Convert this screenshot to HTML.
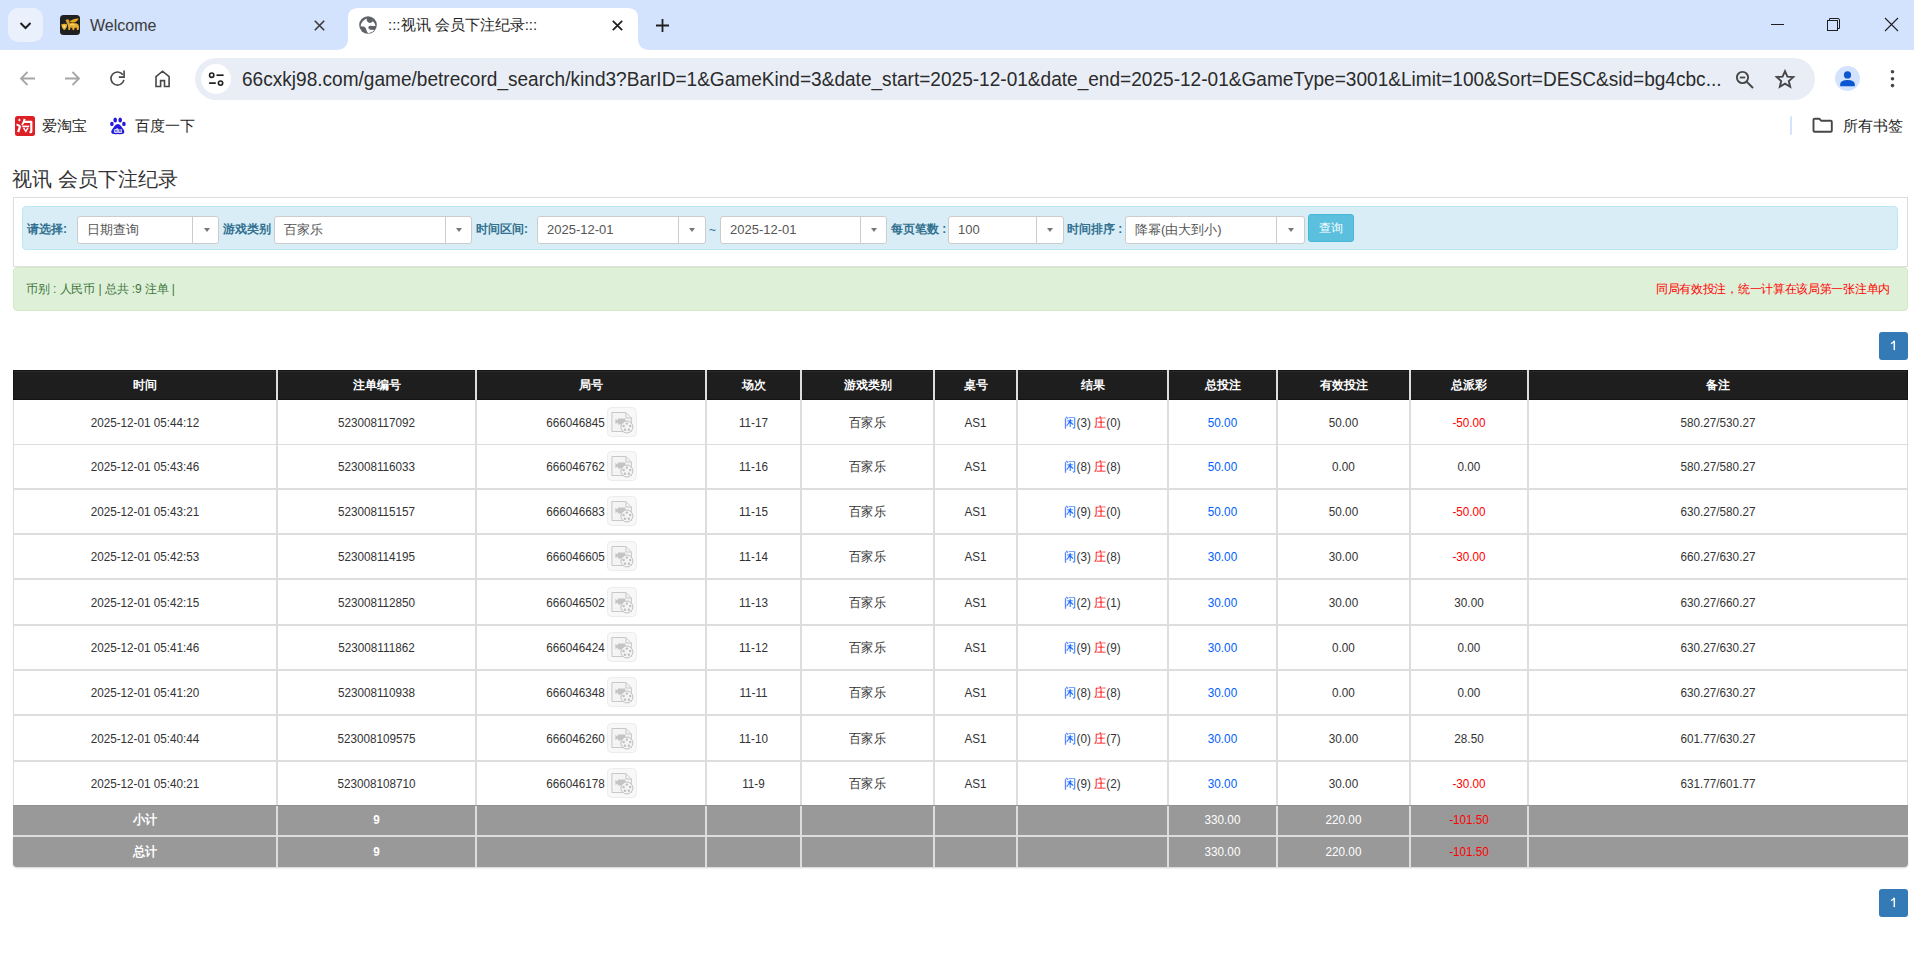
<!DOCTYPE html>
<html><head><meta charset="utf-8"><title>:::视讯 会员下注纪录:::</title>
<style>
*{box-sizing:border-box;margin:0;padding:0}
html,body{width:1914px;height:953px;overflow:hidden;background:#fff;font-family:"Liberation Sans",sans-serif;color:#333}
.a{position:absolute}
#tabbar{left:0;top:0;width:1914px;height:50px;background:#d3e3fd}
#toolbar{left:0;top:50px;width:1914px;height:53px;background:#fff}
#omni{left:195px;top:58px;width:1620px;height:42px;border-radius:21px;background:#e9eef6}
.url{left:242px;top:67px;font-size:20.5px;line-height:24px;color:#2b2b2b;white-space:nowrap;transform-origin:0 0;transform:scaleX(0.93)}
.bm{font-size:15px;color:#1f1f1f;white-space:nowrap}

.th{height:30px;line-height:30px;text-align:center;color:#fff;font-weight:bold;font-size:12px}
.td{text-align:center;font-size:12.5px;color:#333;white-space:nowrap;transform:scaleX(0.936)}
.tt{text-align:center;font-size:12.5px;color:#fff;white-space:nowrap;transform:scaleX(0.936)}
.bl{color:#0060ff}
.rd{color:#f00}
.ic{display:inline-block;width:30px;height:30px;vertical-align:middle;margin-left:3px;line-height:0;position:relative;top:-2px;transform:scaleX(1.068)}
.sel{height:28px;background:#fff;border:1px solid #ccc;border-radius:3px;font-size:13px;color:#555;line-height:26px;padding-left:9px;white-space:nowrap}
.sel i{position:absolute;top:0;bottom:0;border-left:1px solid #ccc}
.sel b{position:absolute;top:11px;width:0;height:0;border-left:3.5px solid transparent;border-right:3.5px solid transparent;border-top:4px solid #777;margin-left:1px}
.lb{font-size:12px;font-weight:bold;color:#31708f;white-space:nowrap;line-height:16px}
</style></head><body>
<!-- TAB BAR -->
<div id="tabbar" class="a"></div>
<div class="a" style="left:8px;top:8px;width:35px;height:34px;border-radius:10px;background:#eaf1fd"></div>
<svg class="a" style="left:17px;top:17px" width="17" height="17" viewBox="0 0 17 17"><path d="M3.5 6 L8.5 11 L13.5 6" fill="none" stroke="#1f1f1f" stroke-width="2"/></svg>
<!-- inactive tab -->
<svg class="a" style="left:60px;top:15px" width="20" height="20" viewBox="0 0 20 20"><rect x="0" y="0" width="20" height="20" rx="3.5" fill="#202020"/><path d="M9.5 7 Q12 3.2 18.8 3.4 Q17.5 6.5 13 7.8 Z" fill="#e6a51c"/><path d="M5.5 5 Q7.5 3.5 9.2 5 L9.6 8.5 L7 9 Z" fill="#d9a030"/><path d="M7.5 8.5 Q11 7.6 16 8.3 Q18.8 8.8 19 11.5 L18.6 15 L17 15 L16.5 12.5 L14.5 13 L14.2 15 L12.6 15 L12.2 12.8 L10.4 12.6 L10 15 L8.4 15 L8.2 12 Z" fill="#e8b030"/><path d="M1.3 9.2 Q4.3 8.2 7.3 9.2 Q7 13.5 4.3 15 Q1.6 13.5 1.3 9.2Z" fill="#eab234"/><circle cx="4.3" cy="11.5" r="1" fill="#fff1b0"/><path d="M10 9.5 Q13 9 15 10" stroke="#fbe38a" stroke-width="0.8" fill="none"/></svg>
<div class="a" style="left:90px;top:16px;font-size:16px;color:#3a3a3a;line-height:20px">Welcome</div>
<svg class="a" style="left:313px;top:19px" width="13" height="13" viewBox="0 0 13 13"><path d="M1.8 1.8 L11.2 11.2 M11.2 1.8 L1.8 11.2" stroke="#3a3a3a" stroke-width="1.6"/></svg>
<!-- active tab -->
<svg class="a" style="left:336px;top:7px" width="314" height="43" viewBox="0 0 314 43"><path d="M0 43 Q12 43 12 31 L12 11 Q12 1 22 1 L292 1 Q302 1 302 11 L302 31 Q302 43 314 43 Z" fill="#fff"/></svg>
<svg class="a" style="left:359px;top:16px" width="18" height="18" viewBox="0 0 18 18"><circle cx="9" cy="9" r="8.8" fill="#5f6368"/><path d="M1.6 10.4 Q2.2 5 7.6 2.6 Q7.2 5.4 9.4 6.6 Q12 7.8 13.8 5.2 Q16.2 7 16.6 9.8 Q14 10.4 12 9.8 Q9.6 9.4 9.3 11.6 Q9.2 13.6 11.6 13.8 L15.6 13.9 Q13.4 16.6 9.2 17.2 Q7.8 15.8 7.4 14.2 Q7.2 11.6 5.2 10.8 Q3.6 10.2 1.6 10.4 Z" fill="#fff"/></svg>
<div class="a" style="left:388px;top:15px;font-size:15px;color:#1f1f1f;line-height:20px;white-space:nowrap">:::视讯 会员下注纪录:::</div>
<svg class="a" style="left:611px;top:19px" width="13" height="13" viewBox="0 0 13 13"><path d="M1.8 1.8 L11.2 11.2 M11.2 1.8 L1.8 11.2" stroke="#1f1f1f" stroke-width="1.7"/></svg>
<svg class="a" style="left:655px;top:18px" width="15" height="15" viewBox="0 0 15 15"><path d="M7.5 1 V14 M1 7.5 H14" stroke="#1f1f1f" stroke-width="1.8"/></svg>
<!-- window controls -->
<div class="a" style="left:1771px;top:24px;width:13px;height:1px;background:#1f1f1f"></div>
<svg class="a" style="left:1826px;top:17px" width="16" height="16" viewBox="0 0 16 16"><rect x="1.5" y="3.5" width="10" height="10" fill="none" stroke="#1f1f1f" stroke-width="1"/><path d="M3.5 3.5 V1.5 H12 Q13.5 1.5 13.5 3 V11.5 H11.5" fill="none" stroke="#1f1f1f" stroke-width="1"/></svg>
<svg class="a" style="left:1884px;top:17px" width="15" height="15" viewBox="0 0 15 15"><path d="M1 1 L14 14 M14 1 L1 14" stroke="#1f1f1f" stroke-width="1.1"/></svg>

<!-- TOOLBAR -->
<div id="toolbar" class="a"></div>
<div id="omni" class="a"></div>
<div class="url a">66cxkj98.com/game/betrecord_search/kind3?BarID=1&amp;GameKind=3&amp;date_start=2025-12-01&amp;date_end=2025-12-01&amp;GameType=3001&amp;Limit=100&amp;Sort=DESC&amp;sid=bg4cbc...</div>


<!-- toolbar icons -->
<svg class="a" style="left:18px;top:69px" width="19" height="19" viewBox="0 0 19 19"><path d="M17 9.5 H3.5 M9.5 3 L3 9.5 L9.5 16" fill="none" stroke="#a6a6a6" stroke-width="1.8"/></svg>
<svg class="a" style="left:63px;top:69px" width="19" height="19" viewBox="0 0 19 19"><path d="M2 9.5 H15.5 M9.5 3 L16 9.5 L9.5 16" fill="none" stroke="#a6a6a6" stroke-width="1.8"/></svg>
<svg class="a" style="left:108px;top:69px" width="19" height="19" viewBox="0 0 19 19"><path d="M15.9 10.8 A6.55 6.55 0 1 1 14.9 5.8" fill="none" stroke="#474747" stroke-width="1.6"/><path d="M16.1 1.6 V8.1 H10.8" fill="none" stroke="#474747" stroke-width="1.6"/></svg>
<svg class="a" style="left:153px;top:68px" width="20" height="21" viewBox="0 0 20 21"><path d="M3 18.5 V8.6 L9.55 3.2 L16.1 8.6 V18.5 H11.5 V12.6 H7.6 V18.5 Z" fill="none" stroke="#474747" stroke-width="1.6" stroke-linejoin="miter"/></svg>
<div class="a" style="left:201px;top:64px;width:30px;height:30px;border-radius:50%;background:#fff"></div>
<svg class="a" style="left:207px;top:70px" width="18" height="18" viewBox="0 0 18 18"><circle cx="4.7" cy="5.2" r="2.15" fill="none" stroke="#1f1f1f" stroke-width="1.6"/><path d="M9.5 5.2 H16.6" stroke="#1f1f1f" stroke-width="1.7"/><circle cx="13.55" cy="13.1" r="2.15" fill="none" stroke="#1f1f1f" stroke-width="1.6"/><path d="M2.1 13.1 H8.8" stroke="#1f1f1f" stroke-width="1.7"/></svg>
<svg class="a" style="left:1735px;top:70px" width="20" height="20" viewBox="0 0 20 20"><circle cx="7.5" cy="7.5" r="5.6" fill="none" stroke="#474747" stroke-width="1.9"/><path d="M4.8 7.5 H10.2" stroke="#474747" stroke-width="1.8"/><path d="M11.6 11.6 L18 18" stroke="#474747" stroke-width="2"/></svg>
<svg class="a" style="left:1774px;top:69px" width="22" height="21" viewBox="0 0 22 21"><path d="M11 2.2 L13.4 7.6 L19.3 8.1 L14.8 12 L16.2 17.8 L11 14.7 L5.8 17.8 L7.2 12 L2.7 8.1 L8.6 7.6 Z" fill="none" stroke="#474747" stroke-width="1.9" stroke-linejoin="miter"/></svg>
<div class="a" style="left:1835px;top:66px;width:25px;height:25px;border-radius:50%;background:#d3e3fd"></div>
<svg class="a" style="left:1835px;top:66px" width="25" height="25" viewBox="0 0 25 25"><circle cx="12.5" cy="8.9" r="3.6" fill="#0b57d0"/><path d="M5.2 20.2 V18.3 Q5.2 14.3 12.5 14.1 Q19.8 14.3 19.8 18.3 V20.2 Z" fill="#0b57d0"/></svg>
<svg class="a" style="left:1888px;top:69px" width="9" height="20" viewBox="0 0 9 20"><circle cx="4.5" cy="2.8" r="1.8" fill="#474747"/><circle cx="4.5" cy="9.8" r="1.8" fill="#474747"/><circle cx="4.5" cy="16.6" r="1.8" fill="#474747"/></svg>
<!-- bookmark icons -->
<svg class="a" style="left:15px;top:116px" width="20" height="20" viewBox="0 0 20 20"><rect x="0" y="0" width="20" height="20" rx="2.5" fill="#dd1f26"/><path d="M4.3 2.3 L4.9 3.6 L6.1 4 L4.9 4.4 L4.3 5.7 L3.7 4.4 L2.5 4 L3.7 3.6Z" fill="#fff"/><path d="M1.6 7.4 Q4.6 7.8 6.2 10.2 Q5.2 13.4 4.2 16.6 L2 15.4 Q3.4 12.6 3.7 10.8 Q2.8 9.8 1.4 9.4Z" fill="#fff"/><path d="M8.7 2.6 L10.6 3.3 L10.1 4.8 H16.2 Q17.4 4.8 17.4 6.1 V15.6 Q17.4 17.2 15.9 17.2 H14.6 L14.1 15.5 H15.2 V6.9 H9.3 Q8.4 8.4 7.2 9.5 L6.3 8.4 Q7.9 6.2 8.7 2.6Z" fill="#fff"/><path d="M7.3 9.6 H14.2 V11.2 H7.3Z" fill="#fff"/><path d="M7.8 11.9 L10.8 16.8 L13.7 11.9 L12.2 11.6 L10.8 14.2 L9.4 11.6Z" fill="#fff"/></svg>
<svg class="a" style="left:109px;top:116px" width="18" height="20" viewBox="0 0 18 20"><ellipse cx="6.2" cy="4.1" rx="1.8" ry="2.5" fill="#2319dc"/><ellipse cx="11.2" cy="4.1" rx="1.8" ry="2.5" fill="#2319dc"/><ellipse cx="2.9" cy="7.9" rx="1.8" ry="2.2" fill="#2319dc"/><ellipse cx="14.9" cy="7.9" rx="1.8" ry="2.2" fill="#2319dc"/><path d="M8.8 8 Q10.6 8 12.2 10.2 L14.8 14 Q16.2 16.6 14.2 17.8 Q12 18.6 8.8 18 Q5.6 18.6 3.4 17.8 Q1.4 16.6 2.8 14 L5.4 10.2 Q7 8 8.8 8Z" fill="#2319dc"/><text x="8.8" y="16.7" font-size="7" font-weight="bold" text-anchor="middle" fill="#fff" font-family="Liberation Sans" letter-spacing="-0.3">du</text></svg>
<div class="a" style="left:1790px;top:116px;width:2px;height:19px;background:#d3e3fd;border-radius:1px"></div>
<svg class="a" style="left:1811px;top:116px" width="22" height="18" viewBox="0 0 22 18"><path d="M2.5 3.8 Q2.5 2.8 3.5 2.8 H8.3 L10.3 4.8 H19.8 Q20.8 4.8 20.8 5.8 V14.8 Q20.8 15.8 19.8 15.8 H3.5 Q2.5 15.8 2.5 14.8 Z" fill="none" stroke="#474747" stroke-width="1.9"/></svg>
<!-- BOOKMARKS -->
<div class="a bm" style="left:42px;top:117px">爱淘宝</div>
<div class="a bm" style="left:135px;top:117px">百度一下</div>
<div class="a bm" style="left:1843px;top:117px">所有书签</div>

<!-- PAGE -->
<div class="a" style="left:12px;top:166px;font-size:20px;color:#333;white-space:nowrap">视讯 会员下注纪录</div>

<!-- panel -->
<div class="a" style="left:13px;top:197px;width:1895px;height:70px;border:1px solid #ddd"></div>
<div class="a" style="left:22px;top:206px;width:1876px;height:44px;background:#d9edf7;border:1px solid #bce8f1;border-radius:4px"></div>
<div class="a lb" style="left:27px;top:221px">请选择:</div>
<div class="a sel" style="left:77px;top:216px;width:142px">日期查询<i style="left:114px"></i><b style="left:125px"></b></div>
<div class="a lb" style="left:223px;top:221px">游戏类别</div>
<div class="a sel" style="left:274px;top:216px;width:198px">百家乐<i style="left:170px"></i><b style="left:180px"></b></div>
<div class="a lb" style="left:476px;top:221px">时间区间:</div>
<div class="a sel" style="left:537px;top:216px;width:169px">2025-12-01<i style="left:140px"></i><b style="left:150px"></b></div>
<div class="a" style="left:709px;top:223px;font-size:12px;color:#31708f">~</div>
<div class="a sel" style="left:720px;top:216px;width:167px">2025-12-01<i style="left:139px"></i><b style="left:149px"></b></div>
<div class="a lb" style="left:891px;top:221px">每页笔数 :</div>
<div class="a sel" style="left:948px;top:216px;width:116px">100<i style="left:87px"></i><b style="left:97px"></b></div>
<div class="a lb" style="left:1067px;top:221px">时间排序 :</div>
<div class="a sel" style="left:1125px;top:216px;width:180px">降幂(由大到小)<i style="left:150px"></i><b style="left:161px"></b></div>
<div class="a" style="left:1308px;top:214px;width:46px;height:28px;background:#5bc0de;border:1px solid #46b8da;border-radius:3px;color:#fff;font-size:12px;text-align:center;line-height:26px">查询</div>
<!-- green -->
<div class="a" style="left:13px;top:267px;width:1895px;height:44px;background:#dff0d8;border:1px solid #d6e9c6;border-radius:4px"></div>
<div class="a" style="left:26px;top:281px;font-size:12px;letter-spacing:-0.1px;color:#3c763d;white-space:nowrap;line-height:16px">币别 : 人民币 | 总共 :9 注单 |</div>
<div class="a" style="left:1600px;top:281px;width:1290px;left:600px;text-align:right;font-size:12px;letter-spacing:-0.3px;color:#f00;white-space:nowrap;line-height:16px">同局有效投注，统一计算在该局第一张注单内</div>
<!-- pagination -->
<div class="a" style="left:1879px;top:332px;width:29px;height:28px;background:#337ab7;border-radius:3px"><svg width="29" height="28" viewBox="0 0 29 28" style="display:block"><path d="M15.3 8.8 V18.1" stroke="#fff" stroke-width="1.5"/><path d="M15.4 8.8 Q14.2 10.8 12 11.6" stroke="#fff" stroke-width="1.3" fill="none"/></svg></div>
<div class="a" style="left:1879px;top:889px;width:29px;height:28px;background:#337ab7;border-radius:3px"><svg width="29" height="28" viewBox="0 0 29 28" style="display:block"><path d="M15.3 8.8 V18.1" stroke="#fff" stroke-width="1.5"/><path d="M15.4 8.8 Q14.2 10.8 12 11.6" stroke="#fff" stroke-width="1.3" fill="none"/></svg></div>
<div class="a" style="left:13px;top:370px;width:1895px;height:30px;background:#1e1e1e;border:1px solid #141414"></div>
<div class="a" style="left:14px;top:371px;width:1893px;height:1px;background:#2a2a2a"></div>
<div class="a th" style="left:14px;top:370px;width:262px">时间</div>
<div class="a th" style="left:278px;top:370px;width:197px">注单编号</div>
<div class="a th" style="left:477px;top:370px;width:228px">局号</div>
<div class="a th" style="left:707px;top:370px;width:93px">场次</div>
<div class="a th" style="left:802px;top:370px;width:131px">游戏类别</div>
<div class="a th" style="left:935px;top:370px;width:81px">桌号</div>
<div class="a th" style="left:1018px;top:370px;width:149px">结果</div>
<div class="a th" style="left:1169px;top:370px;width:107px">总投注</div>
<div class="a th" style="left:1278px;top:370px;width:131px">有效投注</div>
<div class="a th" style="left:1411px;top:370px;width:116px">总派彩</div>
<div class="a th" style="left:1529px;top:370px;width:378px">备注</div>
<div class="a" style="left:13px;top:400px;width:1px;height:405px;background:#ddd"></div>
<div class="a" style="left:1907px;top:400px;width:1px;height:405px;background:#ddd"></div>
<div class="a" style="left:276px;top:370px;width:2px;height:435px;background:#ddd"></div>
<div class="a" style="left:475px;top:370px;width:2px;height:435px;background:#ddd"></div>
<div class="a" style="left:705px;top:370px;width:2px;height:435px;background:#ddd"></div>
<div class="a" style="left:800px;top:370px;width:2px;height:435px;background:#ddd"></div>
<div class="a" style="left:933px;top:370px;width:2px;height:435px;background:#ddd"></div>
<div class="a" style="left:1016px;top:370px;width:2px;height:435px;background:#ddd"></div>
<div class="a" style="left:1167px;top:370px;width:2px;height:435px;background:#ddd"></div>
<div class="a" style="left:1276px;top:370px;width:2px;height:435px;background:#ddd"></div>
<div class="a" style="left:1409px;top:370px;width:2px;height:435px;background:#ddd"></div>
<div class="a" style="left:1527px;top:370px;width:2px;height:435px;background:#ddd"></div>
<div class="a" style="left:13px;top:444px;width:1895px;height:1px;background:#ddd"></div>
<div class="a" style="left:13px;top:488px;width:1895px;height:2px;background:#ddd"></div>
<div class="a" style="left:13px;top:533px;width:1895px;height:2px;background:#ddd"></div>
<div class="a" style="left:13px;top:578px;width:1895px;height:2px;background:#ddd"></div>
<div class="a" style="left:13px;top:624px;width:1895px;height:2px;background:#ddd"></div>
<div class="a" style="left:13px;top:669px;width:1895px;height:2px;background:#ddd"></div>
<div class="a" style="left:13px;top:714px;width:1895px;height:2px;background:#ddd"></div>
<div class="a" style="left:13px;top:760px;width:1895px;height:2px;background:#ddd"></div>
<div class="a td" style="left:14px;top:401px;width:262px;height:44px;line-height:44px">2025-12-01 05:44:12</div>
<div class="a td" style="left:278px;top:401px;width:197px;height:44px;line-height:44px">523008117092</div>
<div class="a td" style="left:477px;top:401px;width:228px;height:44px;line-height:44px"><span>666046845</span><span class="ic"><svg width="30" height="30" viewBox="0 0 30 30"><rect x="0.5" y="0.5" width="29" height="29" rx="4" fill="#f8f8f8" stroke="#ececec"/><path d="M5 5.5 H19 L24.5 11 V24.5 H5 Z" fill="#f4f4f4" stroke="#c8c8c8" stroke-width="1"/><path d="M19 5.5 V11 H24.5" fill="none" stroke="#c8c8c8"/><path d="M8.5 12 L11 13.5 V11.5 H18.5 V17.5 H11 V15.5 L8.5 17 Z" fill="#c4c4c4"/><circle cx="20" cy="20" r="6" fill="#f4f4f4" stroke="#c0c0c0" stroke-width="1"/><circle cx="20" cy="16.6" r="1.2" fill="#c0c0c0"/><circle cx="23.3" cy="19" r="1.2" fill="#c0c0c0"/><circle cx="22" cy="22.8" r="1.2" fill="#c0c0c0"/><circle cx="18" cy="22.8" r="1.2" fill="#c0c0c0"/><circle cx="16.7" cy="19" r="1.2" fill="#c0c0c0"/></svg>
</span></div>
<div class="a td" style="left:707px;top:401px;width:93px;height:44px;line-height:44px">11-17</div>
<div class="a td" style="left:802px;top:401px;width:131px;height:44px;line-height:44px">百家乐</div>
<div class="a td" style="left:935px;top:401px;width:81px;height:44px;line-height:44px">AS1</div>
<div class="a td" style="left:1018px;top:401px;width:149px;height:44px;line-height:44px"><span class="bl">闲</span>(3) <span class="rd">庄</span>(0)</div>
<div class="a td" style="left:1169px;top:401px;width:107px;height:44px;line-height:44px"><span class="bl">50.00</span></div>
<div class="a td" style="left:1278px;top:401px;width:131px;height:44px;line-height:44px">50.00</div>
<div class="a td" style="left:1411px;top:401px;width:116px;height:44px;line-height:44px"><span class="rd">-50.00</span></div>
<div class="a td" style="left:1529px;top:401px;width:378px;height:44px;line-height:44px">580.27/530.27</div>
<div class="a td" style="left:14px;top:446px;width:262px;height:43px;line-height:43px">2025-12-01 05:43:46</div>
<div class="a td" style="left:278px;top:446px;width:197px;height:43px;line-height:43px">523008116033</div>
<div class="a td" style="left:477px;top:446px;width:228px;height:43px;line-height:43px"><span>666046762</span><span class="ic"><svg width="30" height="30" viewBox="0 0 30 30"><rect x="0.5" y="0.5" width="29" height="29" rx="4" fill="#f8f8f8" stroke="#ececec"/><path d="M5 5.5 H19 L24.5 11 V24.5 H5 Z" fill="#f4f4f4" stroke="#c8c8c8" stroke-width="1"/><path d="M19 5.5 V11 H24.5" fill="none" stroke="#c8c8c8"/><path d="M8.5 12 L11 13.5 V11.5 H18.5 V17.5 H11 V15.5 L8.5 17 Z" fill="#c4c4c4"/><circle cx="20" cy="20" r="6" fill="#f4f4f4" stroke="#c0c0c0" stroke-width="1"/><circle cx="20" cy="16.6" r="1.2" fill="#c0c0c0"/><circle cx="23.3" cy="19" r="1.2" fill="#c0c0c0"/><circle cx="22" cy="22.8" r="1.2" fill="#c0c0c0"/><circle cx="18" cy="22.8" r="1.2" fill="#c0c0c0"/><circle cx="16.7" cy="19" r="1.2" fill="#c0c0c0"/></svg>
</span></div>
<div class="a td" style="left:707px;top:446px;width:93px;height:43px;line-height:43px">11-16</div>
<div class="a td" style="left:802px;top:446px;width:131px;height:43px;line-height:43px">百家乐</div>
<div class="a td" style="left:935px;top:446px;width:81px;height:43px;line-height:43px">AS1</div>
<div class="a td" style="left:1018px;top:446px;width:149px;height:43px;line-height:43px"><span class="bl">闲</span>(8) <span class="rd">庄</span>(8)</div>
<div class="a td" style="left:1169px;top:446px;width:107px;height:43px;line-height:43px"><span class="bl">50.00</span></div>
<div class="a td" style="left:1278px;top:446px;width:131px;height:43px;line-height:43px">0.00</div>
<div class="a td" style="left:1411px;top:446px;width:116px;height:43px;line-height:43px">0.00</div>
<div class="a td" style="left:1529px;top:446px;width:378px;height:43px;line-height:43px">580.27/580.27</div>
<div class="a td" style="left:14px;top:491px;width:262px;height:43px;line-height:43px">2025-12-01 05:43:21</div>
<div class="a td" style="left:278px;top:491px;width:197px;height:43px;line-height:43px">523008115157</div>
<div class="a td" style="left:477px;top:491px;width:228px;height:43px;line-height:43px"><span>666046683</span><span class="ic"><svg width="30" height="30" viewBox="0 0 30 30"><rect x="0.5" y="0.5" width="29" height="29" rx="4" fill="#f8f8f8" stroke="#ececec"/><path d="M5 5.5 H19 L24.5 11 V24.5 H5 Z" fill="#f4f4f4" stroke="#c8c8c8" stroke-width="1"/><path d="M19 5.5 V11 H24.5" fill="none" stroke="#c8c8c8"/><path d="M8.5 12 L11 13.5 V11.5 H18.5 V17.5 H11 V15.5 L8.5 17 Z" fill="#c4c4c4"/><circle cx="20" cy="20" r="6" fill="#f4f4f4" stroke="#c0c0c0" stroke-width="1"/><circle cx="20" cy="16.6" r="1.2" fill="#c0c0c0"/><circle cx="23.3" cy="19" r="1.2" fill="#c0c0c0"/><circle cx="22" cy="22.8" r="1.2" fill="#c0c0c0"/><circle cx="18" cy="22.8" r="1.2" fill="#c0c0c0"/><circle cx="16.7" cy="19" r="1.2" fill="#c0c0c0"/></svg>
</span></div>
<div class="a td" style="left:707px;top:491px;width:93px;height:43px;line-height:43px">11-15</div>
<div class="a td" style="left:802px;top:491px;width:131px;height:43px;line-height:43px">百家乐</div>
<div class="a td" style="left:935px;top:491px;width:81px;height:43px;line-height:43px">AS1</div>
<div class="a td" style="left:1018px;top:491px;width:149px;height:43px;line-height:43px"><span class="bl">闲</span>(9) <span class="rd">庄</span>(0)</div>
<div class="a td" style="left:1169px;top:491px;width:107px;height:43px;line-height:43px"><span class="bl">50.00</span></div>
<div class="a td" style="left:1278px;top:491px;width:131px;height:43px;line-height:43px">50.00</div>
<div class="a td" style="left:1411px;top:491px;width:116px;height:43px;line-height:43px"><span class="rd">-50.00</span></div>
<div class="a td" style="left:1529px;top:491px;width:378px;height:43px;line-height:43px">630.27/580.27</div>
<div class="a td" style="left:14px;top:536px;width:262px;height:43px;line-height:43px">2025-12-01 05:42:53</div>
<div class="a td" style="left:278px;top:536px;width:197px;height:43px;line-height:43px">523008114195</div>
<div class="a td" style="left:477px;top:536px;width:228px;height:43px;line-height:43px"><span>666046605</span><span class="ic"><svg width="30" height="30" viewBox="0 0 30 30"><rect x="0.5" y="0.5" width="29" height="29" rx="4" fill="#f8f8f8" stroke="#ececec"/><path d="M5 5.5 H19 L24.5 11 V24.5 H5 Z" fill="#f4f4f4" stroke="#c8c8c8" stroke-width="1"/><path d="M19 5.5 V11 H24.5" fill="none" stroke="#c8c8c8"/><path d="M8.5 12 L11 13.5 V11.5 H18.5 V17.5 H11 V15.5 L8.5 17 Z" fill="#c4c4c4"/><circle cx="20" cy="20" r="6" fill="#f4f4f4" stroke="#c0c0c0" stroke-width="1"/><circle cx="20" cy="16.6" r="1.2" fill="#c0c0c0"/><circle cx="23.3" cy="19" r="1.2" fill="#c0c0c0"/><circle cx="22" cy="22.8" r="1.2" fill="#c0c0c0"/><circle cx="18" cy="22.8" r="1.2" fill="#c0c0c0"/><circle cx="16.7" cy="19" r="1.2" fill="#c0c0c0"/></svg>
</span></div>
<div class="a td" style="left:707px;top:536px;width:93px;height:43px;line-height:43px">11-14</div>
<div class="a td" style="left:802px;top:536px;width:131px;height:43px;line-height:43px">百家乐</div>
<div class="a td" style="left:935px;top:536px;width:81px;height:43px;line-height:43px">AS1</div>
<div class="a td" style="left:1018px;top:536px;width:149px;height:43px;line-height:43px"><span class="bl">闲</span>(3) <span class="rd">庄</span>(8)</div>
<div class="a td" style="left:1169px;top:536px;width:107px;height:43px;line-height:43px"><span class="bl">30.00</span></div>
<div class="a td" style="left:1278px;top:536px;width:131px;height:43px;line-height:43px">30.00</div>
<div class="a td" style="left:1411px;top:536px;width:116px;height:43px;line-height:43px"><span class="rd">-30.00</span></div>
<div class="a td" style="left:1529px;top:536px;width:378px;height:43px;line-height:43px">660.27/630.27</div>
<div class="a td" style="left:14px;top:581px;width:262px;height:44px;line-height:44px">2025-12-01 05:42:15</div>
<div class="a td" style="left:278px;top:581px;width:197px;height:44px;line-height:44px">523008112850</div>
<div class="a td" style="left:477px;top:581px;width:228px;height:44px;line-height:44px"><span>666046502</span><span class="ic"><svg width="30" height="30" viewBox="0 0 30 30"><rect x="0.5" y="0.5" width="29" height="29" rx="4" fill="#f8f8f8" stroke="#ececec"/><path d="M5 5.5 H19 L24.5 11 V24.5 H5 Z" fill="#f4f4f4" stroke="#c8c8c8" stroke-width="1"/><path d="M19 5.5 V11 H24.5" fill="none" stroke="#c8c8c8"/><path d="M8.5 12 L11 13.5 V11.5 H18.5 V17.5 H11 V15.5 L8.5 17 Z" fill="#c4c4c4"/><circle cx="20" cy="20" r="6" fill="#f4f4f4" stroke="#c0c0c0" stroke-width="1"/><circle cx="20" cy="16.6" r="1.2" fill="#c0c0c0"/><circle cx="23.3" cy="19" r="1.2" fill="#c0c0c0"/><circle cx="22" cy="22.8" r="1.2" fill="#c0c0c0"/><circle cx="18" cy="22.8" r="1.2" fill="#c0c0c0"/><circle cx="16.7" cy="19" r="1.2" fill="#c0c0c0"/></svg>
</span></div>
<div class="a td" style="left:707px;top:581px;width:93px;height:44px;line-height:44px">11-13</div>
<div class="a td" style="left:802px;top:581px;width:131px;height:44px;line-height:44px">百家乐</div>
<div class="a td" style="left:935px;top:581px;width:81px;height:44px;line-height:44px">AS1</div>
<div class="a td" style="left:1018px;top:581px;width:149px;height:44px;line-height:44px"><span class="bl">闲</span>(2) <span class="rd">庄</span>(1)</div>
<div class="a td" style="left:1169px;top:581px;width:107px;height:44px;line-height:44px"><span class="bl">30.00</span></div>
<div class="a td" style="left:1278px;top:581px;width:131px;height:44px;line-height:44px">30.00</div>
<div class="a td" style="left:1411px;top:581px;width:116px;height:44px;line-height:44px">30.00</div>
<div class="a td" style="left:1529px;top:581px;width:378px;height:44px;line-height:44px">630.27/660.27</div>
<div class="a td" style="left:14px;top:627px;width:262px;height:43px;line-height:43px">2025-12-01 05:41:46</div>
<div class="a td" style="left:278px;top:627px;width:197px;height:43px;line-height:43px">523008111862</div>
<div class="a td" style="left:477px;top:627px;width:228px;height:43px;line-height:43px"><span>666046424</span><span class="ic"><svg width="30" height="30" viewBox="0 0 30 30"><rect x="0.5" y="0.5" width="29" height="29" rx="4" fill="#f8f8f8" stroke="#ececec"/><path d="M5 5.5 H19 L24.5 11 V24.5 H5 Z" fill="#f4f4f4" stroke="#c8c8c8" stroke-width="1"/><path d="M19 5.5 V11 H24.5" fill="none" stroke="#c8c8c8"/><path d="M8.5 12 L11 13.5 V11.5 H18.5 V17.5 H11 V15.5 L8.5 17 Z" fill="#c4c4c4"/><circle cx="20" cy="20" r="6" fill="#f4f4f4" stroke="#c0c0c0" stroke-width="1"/><circle cx="20" cy="16.6" r="1.2" fill="#c0c0c0"/><circle cx="23.3" cy="19" r="1.2" fill="#c0c0c0"/><circle cx="22" cy="22.8" r="1.2" fill="#c0c0c0"/><circle cx="18" cy="22.8" r="1.2" fill="#c0c0c0"/><circle cx="16.7" cy="19" r="1.2" fill="#c0c0c0"/></svg>
</span></div>
<div class="a td" style="left:707px;top:627px;width:93px;height:43px;line-height:43px">11-12</div>
<div class="a td" style="left:802px;top:627px;width:131px;height:43px;line-height:43px">百家乐</div>
<div class="a td" style="left:935px;top:627px;width:81px;height:43px;line-height:43px">AS1</div>
<div class="a td" style="left:1018px;top:627px;width:149px;height:43px;line-height:43px"><span class="bl">闲</span>(9) <span class="rd">庄</span>(9)</div>
<div class="a td" style="left:1169px;top:627px;width:107px;height:43px;line-height:43px"><span class="bl">30.00</span></div>
<div class="a td" style="left:1278px;top:627px;width:131px;height:43px;line-height:43px">0.00</div>
<div class="a td" style="left:1411px;top:627px;width:116px;height:43px;line-height:43px">0.00</div>
<div class="a td" style="left:1529px;top:627px;width:378px;height:43px;line-height:43px">630.27/630.27</div>
<div class="a td" style="left:14px;top:672px;width:262px;height:43px;line-height:43px">2025-12-01 05:41:20</div>
<div class="a td" style="left:278px;top:672px;width:197px;height:43px;line-height:43px">523008110938</div>
<div class="a td" style="left:477px;top:672px;width:228px;height:43px;line-height:43px"><span>666046348</span><span class="ic"><svg width="30" height="30" viewBox="0 0 30 30"><rect x="0.5" y="0.5" width="29" height="29" rx="4" fill="#f8f8f8" stroke="#ececec"/><path d="M5 5.5 H19 L24.5 11 V24.5 H5 Z" fill="#f4f4f4" stroke="#c8c8c8" stroke-width="1"/><path d="M19 5.5 V11 H24.5" fill="none" stroke="#c8c8c8"/><path d="M8.5 12 L11 13.5 V11.5 H18.5 V17.5 H11 V15.5 L8.5 17 Z" fill="#c4c4c4"/><circle cx="20" cy="20" r="6" fill="#f4f4f4" stroke="#c0c0c0" stroke-width="1"/><circle cx="20" cy="16.6" r="1.2" fill="#c0c0c0"/><circle cx="23.3" cy="19" r="1.2" fill="#c0c0c0"/><circle cx="22" cy="22.8" r="1.2" fill="#c0c0c0"/><circle cx="18" cy="22.8" r="1.2" fill="#c0c0c0"/><circle cx="16.7" cy="19" r="1.2" fill="#c0c0c0"/></svg>
</span></div>
<div class="a td" style="left:707px;top:672px;width:93px;height:43px;line-height:43px">11-11</div>
<div class="a td" style="left:802px;top:672px;width:131px;height:43px;line-height:43px">百家乐</div>
<div class="a td" style="left:935px;top:672px;width:81px;height:43px;line-height:43px">AS1</div>
<div class="a td" style="left:1018px;top:672px;width:149px;height:43px;line-height:43px"><span class="bl">闲</span>(8) <span class="rd">庄</span>(8)</div>
<div class="a td" style="left:1169px;top:672px;width:107px;height:43px;line-height:43px"><span class="bl">30.00</span></div>
<div class="a td" style="left:1278px;top:672px;width:131px;height:43px;line-height:43px">0.00</div>
<div class="a td" style="left:1411px;top:672px;width:116px;height:43px;line-height:43px">0.00</div>
<div class="a td" style="left:1529px;top:672px;width:378px;height:43px;line-height:43px">630.27/630.27</div>
<div class="a td" style="left:14px;top:717px;width:262px;height:44px;line-height:44px">2025-12-01 05:40:44</div>
<div class="a td" style="left:278px;top:717px;width:197px;height:44px;line-height:44px">523008109575</div>
<div class="a td" style="left:477px;top:717px;width:228px;height:44px;line-height:44px"><span>666046260</span><span class="ic"><svg width="30" height="30" viewBox="0 0 30 30"><rect x="0.5" y="0.5" width="29" height="29" rx="4" fill="#f8f8f8" stroke="#ececec"/><path d="M5 5.5 H19 L24.5 11 V24.5 H5 Z" fill="#f4f4f4" stroke="#c8c8c8" stroke-width="1"/><path d="M19 5.5 V11 H24.5" fill="none" stroke="#c8c8c8"/><path d="M8.5 12 L11 13.5 V11.5 H18.5 V17.5 H11 V15.5 L8.5 17 Z" fill="#c4c4c4"/><circle cx="20" cy="20" r="6" fill="#f4f4f4" stroke="#c0c0c0" stroke-width="1"/><circle cx="20" cy="16.6" r="1.2" fill="#c0c0c0"/><circle cx="23.3" cy="19" r="1.2" fill="#c0c0c0"/><circle cx="22" cy="22.8" r="1.2" fill="#c0c0c0"/><circle cx="18" cy="22.8" r="1.2" fill="#c0c0c0"/><circle cx="16.7" cy="19" r="1.2" fill="#c0c0c0"/></svg>
</span></div>
<div class="a td" style="left:707px;top:717px;width:93px;height:44px;line-height:44px">11-10</div>
<div class="a td" style="left:802px;top:717px;width:131px;height:44px;line-height:44px">百家乐</div>
<div class="a td" style="left:935px;top:717px;width:81px;height:44px;line-height:44px">AS1</div>
<div class="a td" style="left:1018px;top:717px;width:149px;height:44px;line-height:44px"><span class="bl">闲</span>(0) <span class="rd">庄</span>(7)</div>
<div class="a td" style="left:1169px;top:717px;width:107px;height:44px;line-height:44px"><span class="bl">30.00</span></div>
<div class="a td" style="left:1278px;top:717px;width:131px;height:44px;line-height:44px">30.00</div>
<div class="a td" style="left:1411px;top:717px;width:116px;height:44px;line-height:44px">28.50</div>
<div class="a td" style="left:1529px;top:717px;width:378px;height:44px;line-height:44px">601.77/630.27</div>
<div class="a td" style="left:14px;top:763px;width:262px;height:43px;line-height:43px">2025-12-01 05:40:21</div>
<div class="a td" style="left:278px;top:763px;width:197px;height:43px;line-height:43px">523008108710</div>
<div class="a td" style="left:477px;top:763px;width:228px;height:43px;line-height:43px"><span>666046178</span><span class="ic"><svg width="30" height="30" viewBox="0 0 30 30"><rect x="0.5" y="0.5" width="29" height="29" rx="4" fill="#f8f8f8" stroke="#ececec"/><path d="M5 5.5 H19 L24.5 11 V24.5 H5 Z" fill="#f4f4f4" stroke="#c8c8c8" stroke-width="1"/><path d="M19 5.5 V11 H24.5" fill="none" stroke="#c8c8c8"/><path d="M8.5 12 L11 13.5 V11.5 H18.5 V17.5 H11 V15.5 L8.5 17 Z" fill="#c4c4c4"/><circle cx="20" cy="20" r="6" fill="#f4f4f4" stroke="#c0c0c0" stroke-width="1"/><circle cx="20" cy="16.6" r="1.2" fill="#c0c0c0"/><circle cx="23.3" cy="19" r="1.2" fill="#c0c0c0"/><circle cx="22" cy="22.8" r="1.2" fill="#c0c0c0"/><circle cx="18" cy="22.8" r="1.2" fill="#c0c0c0"/><circle cx="16.7" cy="19" r="1.2" fill="#c0c0c0"/></svg>
</span></div>
<div class="a td" style="left:707px;top:763px;width:93px;height:43px;line-height:43px">11-9</div>
<div class="a td" style="left:802px;top:763px;width:131px;height:43px;line-height:43px">百家乐</div>
<div class="a td" style="left:935px;top:763px;width:81px;height:43px;line-height:43px">AS1</div>
<div class="a td" style="left:1018px;top:763px;width:149px;height:43px;line-height:43px"><span class="bl">闲</span>(9) <span class="rd">庄</span>(2)</div>
<div class="a td" style="left:1169px;top:763px;width:107px;height:43px;line-height:43px"><span class="bl">30.00</span></div>
<div class="a td" style="left:1278px;top:763px;width:131px;height:43px;line-height:43px">30.00</div>
<div class="a td" style="left:1411px;top:763px;width:116px;height:43px;line-height:43px"><span class="rd">-30.00</span></div>
<div class="a td" style="left:1529px;top:763px;width:378px;height:43px;line-height:43px">631.77/601.77</div>
<div class="a" style="left:13px;top:805px;width:1895px;height:30px;background:#999"></div>
<div class="a" style="left:276px;top:805px;width:2px;height:30px;background:#ddd"></div>
<div class="a" style="left:475px;top:805px;width:2px;height:30px;background:#ddd"></div>
<div class="a" style="left:705px;top:805px;width:2px;height:30px;background:#ddd"></div>
<div class="a" style="left:800px;top:805px;width:2px;height:30px;background:#ddd"></div>
<div class="a" style="left:933px;top:805px;width:2px;height:30px;background:#ddd"></div>
<div class="a" style="left:1016px;top:805px;width:2px;height:30px;background:#ddd"></div>
<div class="a" style="left:1167px;top:805px;width:2px;height:30px;background:#ddd"></div>
<div class="a" style="left:1276px;top:805px;width:2px;height:30px;background:#ddd"></div>
<div class="a" style="left:1409px;top:805px;width:2px;height:30px;background:#ddd"></div>
<div class="a" style="left:1527px;top:805px;width:2px;height:30px;background:#ddd"></div>
<div class="a tt" style="left:14px;top:805px;width:262px;height:30px;line-height:30px;font-weight:bold">小计</div>
<div class="a tt" style="left:278px;top:805px;width:197px;height:30px;line-height:30px;font-weight:bold">9</div>
<div class="a tt" style="left:1169px;top:805px;width:107px;height:30px;line-height:30px;font-weight:normal">330.00</div>
<div class="a tt" style="left:1278px;top:805px;width:131px;height:30px;line-height:30px;font-weight:normal">220.00</div>
<div class="a tt" style="left:1411px;top:805px;width:116px;height:30px;line-height:30px;font-weight:normal"><span class="rd">-101.50</span></div>
<div class="a" style="left:13px;top:837px;width:1895px;height:30px;background:#999;border-radius:0 0 4px 4px;box-shadow:0 1px 2px rgba(0,0,0,.18)"></div>
<div class="a" style="left:276px;top:837px;width:2px;height:30px;background:#ddd"></div>
<div class="a" style="left:475px;top:837px;width:2px;height:30px;background:#ddd"></div>
<div class="a" style="left:705px;top:837px;width:2px;height:30px;background:#ddd"></div>
<div class="a" style="left:800px;top:837px;width:2px;height:30px;background:#ddd"></div>
<div class="a" style="left:933px;top:837px;width:2px;height:30px;background:#ddd"></div>
<div class="a" style="left:1016px;top:837px;width:2px;height:30px;background:#ddd"></div>
<div class="a" style="left:1167px;top:837px;width:2px;height:30px;background:#ddd"></div>
<div class="a" style="left:1276px;top:837px;width:2px;height:30px;background:#ddd"></div>
<div class="a" style="left:1409px;top:837px;width:2px;height:30px;background:#ddd"></div>
<div class="a" style="left:1527px;top:837px;width:2px;height:30px;background:#ddd"></div>
<div class="a tt" style="left:14px;top:837px;width:262px;height:30px;line-height:30px;font-weight:bold">总计</div>
<div class="a tt" style="left:278px;top:837px;width:197px;height:30px;line-height:30px;font-weight:bold">9</div>
<div class="a tt" style="left:1169px;top:837px;width:107px;height:30px;line-height:30px;font-weight:normal">330.00</div>
<div class="a tt" style="left:1278px;top:837px;width:131px;height:30px;line-height:30px;font-weight:normal">220.00</div>
<div class="a tt" style="left:1411px;top:837px;width:116px;height:30px;line-height:30px;font-weight:normal"><span class="rd">-101.50</span></div>
<div class="a" style="left:13px;top:835px;width:1895px;height:2px;background:#ddd"></div>
<div class="a" style="left:14px;top:805px;width:1893px;height:1px;background:#919191"></div>
</body></html>
